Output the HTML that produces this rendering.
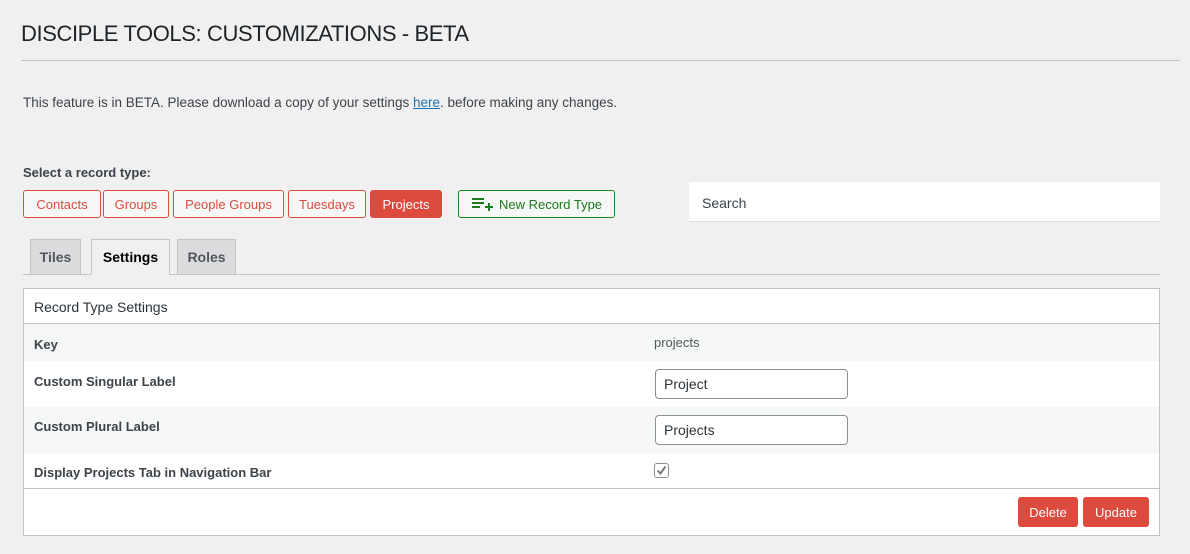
<!DOCTYPE html>
<html><head><meta charset="utf-8"><style>
*{box-sizing:border-box;margin:0;padding:0}
body{width:1190px;height:554px;background:#f0f0f1;font-family:"Liberation Sans",sans-serif;color:#3c434a;position:relative;overflow:hidden;font-size:13px}
.a{position:absolute}
.btn{position:absolute;top:190px;height:28px;border:1px solid #dd4b3f;border-radius:3px;background:#f6f7f7;color:#dd4b3f;font-size:13px;display:flex;align-items:center;justify-content:center}
.tab{position:absolute;top:239px;height:36px;border:1px solid #c3c4c7;background:#dcdcde;font-weight:bold;font-size:14px;display:flex;align-items:center;justify-content:center;color:#50575e}
.row{position:absolute;left:0;right:0}
.lbl{position:absolute;left:10px;font-weight:bold;font-size:13px;color:#3c434a}
.inp{position:absolute;left:631px;width:193px;height:30px;border:1px solid #8c8f94;border-radius:4px;background:#fff;font-size:14px;padding-left:8px;display:flex;align-items:center;color:#2c3338}
.rb{position:absolute;top:497px;height:30px;background:#dd4b3f;color:#fff;border-radius:3px;font-size:13px;display:flex;align-items:center;justify-content:center}
</style></head><body>
<div class="a" style="left:21px;top:21px;font-size:22px;color:#1d2327;letter-spacing:-0.4px">DISCIPLE TOOLS: CUSTOMIZATIONS - BETA</div>
<div class="a" style="left:21px;top:60px;width:1159px;height:1px;background:#c3c4c7"></div>
<div class="a" style="left:23px;top:95px;font-size:13.5px">This feature is in BETA. Please download a copy of your settings <span style="color:#2271b1;text-decoration:underline">here</span>. before making any changes.</div>
<div class="a" style="left:23px;top:165px;font-weight:bold">Select a record type:</div>
<div class="btn" style="left:23px;width:78px">Contacts</div>
<div class="btn" style="left:103px;width:66px">Groups</div>
<div class="btn" style="left:173px;width:111px">People Groups</div>
<div class="btn" style="left:288px;width:78px">Tuesdays</div>
<div class="btn" style="left:370px;width:72px;background:#dd4b3f;color:#fff">Projects</div>
<div class="btn" style="left:458px;width:157px;border-color:#1e8a1e;color:#1e7a1e"><svg width="22" height="14" viewBox="0 0 22 14" style="margin-right:6px"><path d="M1 2h12M1 6h12M1 10h8M14 10h8M18 6v8" stroke="#1e7a1e" stroke-width="2" fill="none"/></svg>New Record Type</div>
<div class="a" style="left:689px;top:182px;width:471px;height:40px;background:#fff;border-bottom:1px solid #dcdcde;font-size:14px;padding:13px 0 0 13px;color:#3c434a">Search</div>
<div class="a" style="left:23px;top:274px;width:1137px;height:1px;background:#c3c4c7"></div>
<div class="tab" style="left:30px;width:51px">Tiles</div>
<div class="tab" style="left:91px;width:79px;background:#f0f0f1;border-bottom-color:#f0f0f1;color:#000">Settings</div>
<div class="tab" style="left:177px;width:59px">Roles</div>
<div class="a" style="left:23px;top:288px;width:1137px;height:248px;background:#fff;border:1px solid #c3c4c7">
 <div class="row" style="top:0;height:35px;border-bottom:1px solid #c3c4c7"><div class="a" style="left:10px;top:10px;font-size:14px;color:#2c3338">Record Type Settings</div></div>
 <div class="row" style="top:35px;height:37px;background:#f6f7f7"><div class="lbl" style="top:13px">Key</div><div class="a" style="left:630px;top:11px;color:#50575e">projects</div></div>
 <div class="row" style="top:72px;height:46px"><div class="lbl" style="top:13px">Custom Singular Label</div><div class="inp" style="top:8px">Project</div></div>
 <div class="row" style="top:118px;height:46px;background:#f6f7f7"><div class="lbl" style="top:12px">Custom Plural Label</div><div class="inp" style="top:8px">Projects</div></div>
 <div class="row" style="top:164px;height:36px;border-bottom:1px solid #c3c4c7"><div class="lbl" style="top:12px">Display Projects Tab in Navigation Bar</div>
  <div class="a" style="left:630px;top:10px;width:15px;height:15px;border:1px solid #8c8f94;border-radius:3px;background:#fff"><svg width="13" height="13" viewBox="0 0 13 13" class="a" style="left:0;top:0"><path d="M2.5 6.5l3 3 5-7" stroke="#787c82" stroke-width="2" fill="none"/></svg></div></div>
</div>
<div class="rb" style="left:1018px;width:60px">Delete</div>
<div class="rb" style="left:1083px;width:66px">Update</div>
</body></html>
